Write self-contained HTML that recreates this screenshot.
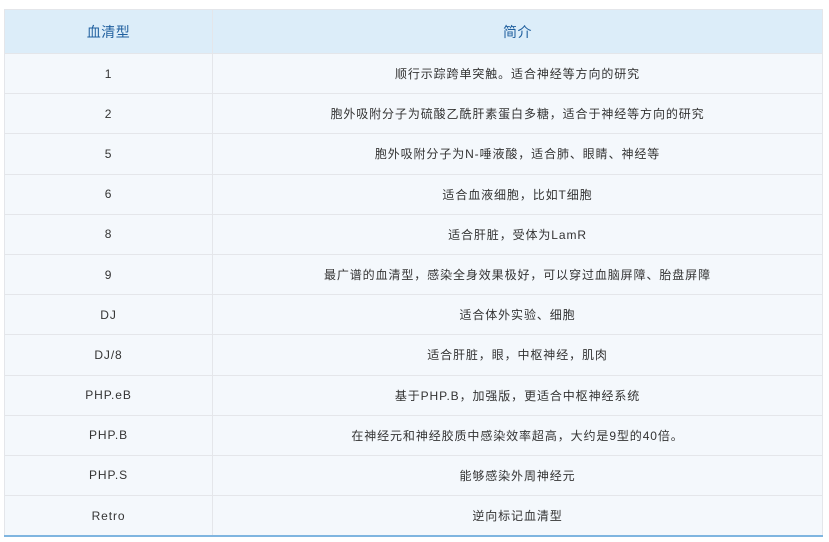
<!DOCTYPE html>
<html><head><meta charset="utf-8"><style>
html,body{margin:0;padding:0;background:#fff;width:829px;height:542px;overflow:hidden}
table{position:absolute;left:4px;top:9px;width:819px;border-collapse:collapse;font-family:"Liberation Sans","Noto Sans CJK SC",sans-serif;font-size:12px;color:#333;border-bottom:2px solid #7fb5e0}
th{background:#dcedf9;color:#1f5f9e;font-weight:normal;font-size:14px;height:43px;border:1px solid #e4e6ea;padding:0;letter-spacing:0.5px}
td{background:#f4f8fc;height:39.2px;border:1px solid #e4e6ea;text-align:center;padding:0;letter-spacing:0.9px}
td:first-child,th:first-child{width:207px}
</style></head><body>
<table>
<tr><th>血清型</th><th>简介</th></tr>
<tr><td>1</td><td>顺行示踪跨单突触。适合神经等方向的研究</td></tr>
<tr><td>2</td><td>胞外吸附分子为硫酸乙酰肝素蛋白多糖，适合于神经等方向的研究</td></tr>
<tr><td>5</td><td>胞外吸附分子为N-唾液酸，适合肺、眼睛、神经等</td></tr>
<tr><td>6</td><td>适合血液细胞，比如T细胞</td></tr>
<tr><td>8</td><td>适合肝脏，受体为LamR</td></tr>
<tr><td>9</td><td>最广谱的血清型，感染全身效果极好，可以穿过血脑屏障、胎盘屏障</td></tr>
<tr><td>DJ</td><td>适合体外实验、细胞</td></tr>
<tr><td>DJ/8</td><td>适合肝脏，眼，中枢神经，肌肉</td></tr>
<tr><td>PHP.eB</td><td>基于PHP.B，加强版，更适合中枢神经系统</td></tr>
<tr><td>PHP.B</td><td>在神经元和神经胶质中感染效率超高，大约是9型的40倍。</td></tr>
<tr><td>PHP.S</td><td>能够感染外周神经元</td></tr>
<tr><td>Retro</td><td>逆向标记血清型</td></tr>
</table>
</body></html>
